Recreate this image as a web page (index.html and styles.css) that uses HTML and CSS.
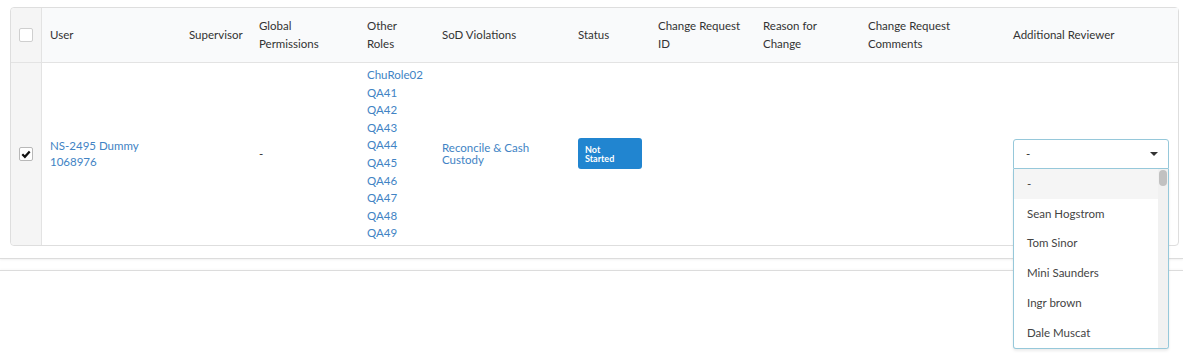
FILE: index.html
```html
<html>
<head>
<link rel="stylesheet" href="styles.css">
</head>
<body>

<div class="panel">
  <div class="grid">
    <div class="cell head cb"><span class="box"></span></div>
    <div class="cell head">User</div>
    <div class="cell head">Supervisor</div>
    <div class="cell head">Global Permissions</div>
    <div class="cell head">Other Roles</div>
    <div class="cell head">SoD Violations</div>
    <div class="cell head">Status</div>
    <div class="cell head">Change Request ID</div>
    <div class="cell head">Reason for Change</div>
    <div class="cell head">Change Request Comments</div>
    <div class="cell head">Additional Reviewer</div>

    <div class="cell cb body"><span class="box checked"><svg width="10" height="10" viewBox="0 0 10 10"><path d="M1.3 5.2 L3.9 7.8 L8.7 2.4" fill="none" stroke="#111" stroke-width="2.2"/></svg></span></div>
    <div class="cell body"><a class="lnk user" href="#">NS-2495 Dummy 1068976</a></div>
    <div class="cell body"></div>
    <div class="cell body">-</div>
    <div class="cell body roles">
      <a class="lnk" href="#">ChuRole02</a>
      <a class="lnk" href="#">QA41</a>
      <a class="lnk" href="#">QA42</a>
      <a class="lnk" href="#">QA43</a>
      <a class="lnk" href="#">QA44</a>
      <a class="lnk" href="#">QA45</a>
      <a class="lnk" href="#">QA46</a>
      <a class="lnk" href="#">QA47</a>
      <a class="lnk" href="#">QA48</a>
      <a class="lnk" href="#">QA49</a>
    </div>
    <div class="cell body"><a class="lnk sod" href="#">Reconcile &amp; Cash Custody</a></div>
    <div class="cell body"><span class="badge">Not<br>Started</span></div>
    <div class="cell body"></div>
    <div class="cell body"></div>
    <div class="cell body"></div>
    <div class="cell body last">
      <div class="dropdown">
        <span class="text">-</span>
        <span class="caret"></span>
        <div class="menu">
          <div class="items">
            <div class="item active">-</div>
            <div class="item">Sean Hogstrom</div>
            <div class="item">Tom Sinor</div>
            <div class="item">Mini Saunders</div>
            <div class="item">Ingr brown</div>
            <div class="item">Dale Muscat</div>
          </div>
          <div class="scroll"><div class="thumb"></div></div>
        </div>
      </div>
    </div>
  </div>
</div>
<div class="next"></div>

</body>
</html>
```

FILE: styles.css
```css
body {
	margin: 0;
	font-family: Lato, "Open Sans", sans-serif;
	font-size: 11.5px;
	color: #333;
	background: #fff;
}

.panel {
	padding: 7px 4px 12px 10px;
	border-bottom: 1px solid #dcdcdc;
	box-shadow: 0 1px 2px rgba(0,0,0,0.06);
}

.next {
	margin-top: 11px;
	border-top: 1px solid #dcdcdc;
	box-shadow: 0 -1px 2px rgba(0,0,0,0.04);
}

.grid {
	display: grid;
	grid-template-columns: 31px 139px 70px 108px 75px 136px 80px 105px 105px 145px 173px;
	border: 1px solid #dedede;
	border-radius: 4px;
	width: 1167px;
}

.cell {
	display: flex;
	align-items: center;
	padding: 0 8px;
	box-sizing: border-box;
	line-height: 18px;
}

.head {
	height: 55px;
	background: #f9fafb;
	border-bottom: 1px solid #e3e3e3;
	color: #333;
}

.head:first-child {
	border-top-left-radius: 4px;
}

.cb {
	justify-content: center;
	padding: 0;
	background: #f5f5f5;
	border-right: 1px solid #e3e3e3;
}

.body.cb {
	border-bottom-left-radius: 4px;
}

.box {
	width: 14px;
	height: 14px;
	box-sizing: border-box;
	border: 1px solid #cfcfcf;
	border-radius: 2px;
	background: #fff;
	display: flex;
	align-items: center;
	justify-content: center;
}

.box.checked {
	border-color: #b8b8b8;
}

.lnk {
	color: #4183c4;
	text-decoration: none;
}

.user {
	line-height: 16px;
}

.sod {
	line-height: 12px;
}

.roles {
	flex-direction: column;
	align-items: flex-start;
	padding-top: 3px;
	padding-bottom: 3px;
}

.roles .lnk {
	line-height: 17.6px;
}

.badge {
	display: block;
	width: 64px;
	height: 31px;
	box-sizing: border-box;
	padding: 7px 7px 0 7px;
	background: #2185d0;
	color: #fff;
	border-radius: 3px;
	font-weight: bold;
	font-size: 9px;
	line-height: 9px;
}

.last {
	position: relative;
}

.dropdown {
	position: relative;
	width: 156px;
	height: 30px;
	box-sizing: border-box;
	border: 1px solid #96c8da;
	border-radius: 3px 3px 0 0;
	display: flex;
	align-items: center;
	justify-content: space-between;
	padding: 0 10px 0 12px;
	color: #333;
	background: #fff;
}

.caret {
	width: 0;
	height: 0;
	border-left: 4px solid transparent;
	border-right: 4px solid transparent;
	border-top: 4px solid #333;
}

.menu {
	position: absolute;
	top: 29px;
	left: -1px;
	width: 156px;
	height: 180px;
	box-sizing: border-box;
	border: 1px solid #96c8da;
	border-top: none;
	border-radius: 0 0 3px 3px;
	background: #fff;
	box-shadow: 0 2px 3px rgba(0,0,0,0.08);
	display: flex;
	overflow: hidden;
}

.items {
	flex: 1;
}

.item {
	height: 29.8px;
	display: flex;
	align-items: center;
	padding-left: 13px;
	color: #444;
}

.item.active {
	background: #f5f5f5;
}

.scroll {
	width: 10px;
	background: #f1f1f1;
	padding: 1px 1px;
	box-sizing: border-box;
}

.thumb {
	height: 16px;
	background: #c1c1c1;
	border-radius: 4px;
}
```
